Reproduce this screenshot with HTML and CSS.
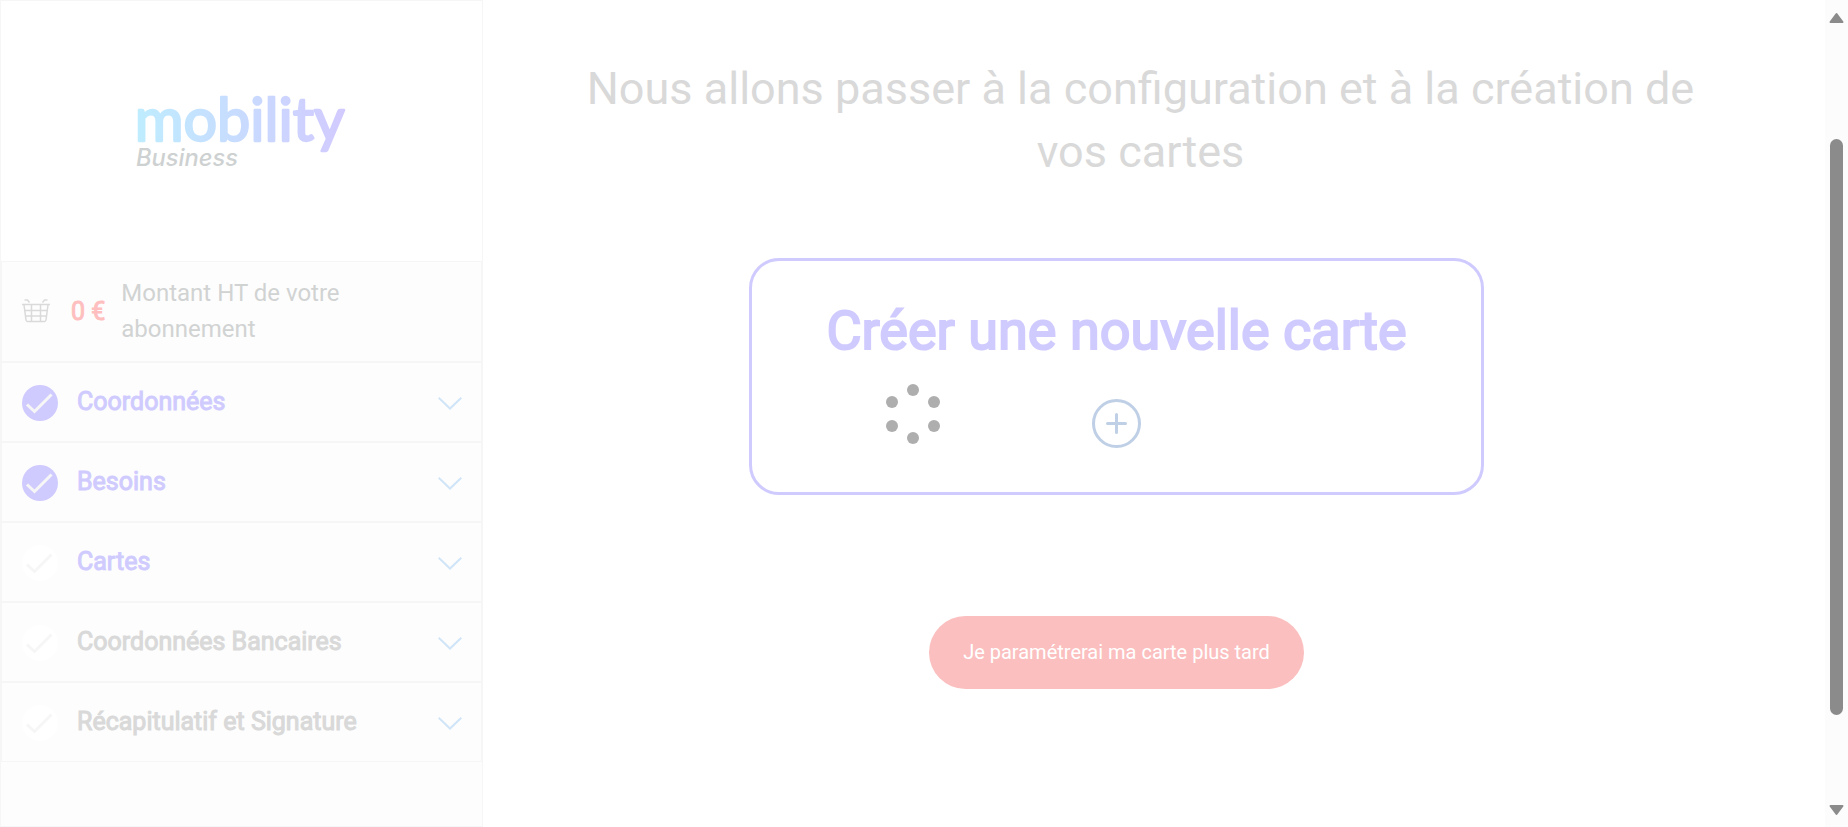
FILE: index.html
```html
<!DOCTYPE html>
<html lang="fr">
<head>
<meta charset="utf-8">
<title>Mobility Business</title>
<link rel="stylesheet" href="styles.css">
</head>
<body>
<svg class="defs" aria-hidden="true">
  <symbol id="check" viewBox="0 0 36 36"><circle class="disc" cx="18" cy="18" r="18"/><path class="tick" d="M5 19.500l7.500 7L29.500 9.500"/></symbol>
  <symbol id="chevron" viewBox="0 0 24 13"><path d="M.7 .8L12 11.500 23.300 .8"/></symbol>
</svg>
<div class="app">
  <aside class="sidebar">
    <div class="brand">
      <svg class="logo" viewBox="0 0 720 315" role="img" aria-label="Mobility Business">
        <defs><linearGradient id="ink" gradientUnits="userSpaceOnUse" x1="55" y1="0" x2="680" y2="0"><stop offset="0" stop-color="#bfecff"/><stop offset=".5" stop-color="#c8dbff"/><stop offset="1" stop-color="#d2caff"/></linearGradient></defs>
        <text class="wordmark" x="44" y="197">mobility</text>
        <text class="subbrand" x="48" y="274">Business</text>
      </svg>
    </div>
    <div class="amount">
      <svg class="basket" viewBox="0 0 28 24" aria-hidden="true"><path d="M2.500 1h3l2 2.500M25.500 1h-3l-2 2.500M0 5.500h28M2 6l2 15q.2 1.500 1.500 1.500h17q1.300 0 1.500-1.500l2-15M3 11.500h22M4 17h20M9.500 6v16M18.500 6v16"/></svg>
      <strong class="price">0 €</strong>
      <span class="caption">Montant HT de votre abonnement</span>
    </div>
    <nav class="steps">
      <button class="step done"><svg class="mark"><use href="#check"/></svg><span class="label">Coordonnées</span><svg class="chevron"><use href="#chevron"/></svg></button>
      <button class="step done"><svg class="mark"><use href="#check"/></svg><span class="label">Besoins</span><svg class="chevron"><use href="#chevron"/></svg></button>
      <button class="step current"><svg class="mark"><use href="#check"/></svg><span class="label">Cartes</span><svg class="chevron"><use href="#chevron"/></svg></button>
      <button class="step"><svg class="mark"><use href="#check"/></svg><span class="label">Coordonnées Bancaires</span><svg class="chevron"><use href="#chevron"/></svg></button>
      <button class="step"><svg class="mark"><use href="#check"/></svg><span class="label">Récapitulatif et Signature</span><svg class="chevron"><use href="#chevron"/></svg></button>
    </nav>
  </aside>
  <main class="content">
    <h1 class="title">Nous allons passer à la configuration et à la création de vos cartes</h1>
    <button class="card">
      <span class="card-title">Créer une nouvelle carte</span>
      <svg class="plus" viewBox="0 0 49 49" aria-hidden="true"><circle cx="24.500" cy="24.500" r="23"/><path d="M15.500 24.500h18M24.500 15.500v18"/></svg>
    </button>
    <button class="later">Je paramétrerai ma carte plus tard</button>
  </main>
  <div class="scrollbar" aria-hidden="true">
    <svg class="arrow" viewBox="0 0 15 11"><path d="M7.500 1.500L13.500 9.500H1.500z"/></svg>
    <div class="track"><div class="thumb"></div></div>
    <svg class="arrow" viewBox="0 0 15 11"><path d="M7.500 9.500L1.500 1.500H13.500z"/></svg>
  </div>
</div>
<div class="loading">
  <svg class="spinner" viewBox="0 0 54 60" role="img" aria-label="Chargement"><circle cx="27" cy="6" r="6"/><circle cx="48" cy="18" r="6"/><circle cx="48" cy="42" r="6"/><circle cx="27" cy="54" r="6"/><circle cx="6" cy="42" r="6"/><circle cx="6" cy="18" r="6"/></svg>
</div>
</body>
</html>
```
FILE: styles.css
```css
* { box-sizing: border-box; }
body { margin: 0; font-family: Roboto, "Liberation Sans", sans-serif; background: #fff; }
button { font-family: inherit; cursor: pointer; }
.defs { position: absolute; width: 0; height: 0; }
.app { display: flex; height: 100vh; overflow: hidden; }

.sidebar { flex: 0 0 483px; border: 1px solid #f6f6f6; background: #fdfdfd; }
.brand { height: 261px; padding: 74px 119px; background: #fff; border-bottom: 1px solid #f6f6f6; }
.logo { display: block; width: 240px; height: 105px; }
.wordmark { font-family: Lato, sans-serif; font-size: 178px; fill: url(#ink); stroke: url(#ink); stroke-width: 7px; stroke-linejoin: round; }
.subbrand { font-family: Inter, sans-serif; font-size: 71px; font-style: italic; font-weight: 500; fill: #ced1d1; }
.amount { display: flex; align-items: center; height: 100px; padding: 0 20px 1px; border: 1px solid #f6f6f6; border-top: 0; }
.basket { width: 28px; height: 24px; fill: none; stroke: #dadada; stroke-width: 1.500px; }
.price { margin-left: 21px; font-size: 25px; font-weight: 400; color: #ffbfbf; -webkit-text-stroke: 1px currentColor; }
.caption { width: 240px; margin-left: 16px; font-size: 24px; line-height: 36px; color: #d1d3d3; }
.step { display: flex; align-items: center; width: 100%; height: 80px; padding: 0 19px 0 20px; border: 1px solid #f6f6f6; background: none; color: #d9d9d9; text-align: left; }
.step.done, .step.current { color: #d0cbff; }
.mark { width: 36px; height: 36px; margin-top: 2px; fill: #fff; stroke: #f6f6f6; }
.done .mark { fill: #d0cbff; }
.disc { stroke: none; }
.tick { fill: none; stroke-width: 3px; }
.label { flex: 1; margin-left: 19px; font-size: 25px; line-height: 36px; -webkit-text-stroke: 1px currentColor; }
.chevron { width: 24px; height: 13px; margin-top: 2px; fill: none; stroke: #d0e5f7; stroke-width: 2px; }

.content { flex: 1; display: flex; flex-direction: column; align-items: center; padding: 57px 75px 0 0; }
.title { margin: 0; padding: 0 30px 0 78px; font-size: 45px; font-weight: 400; line-height: 63px; text-align: center; color: #d9d9d9; }
.card { display: flex; flex-direction: column; align-items: center; width: 58%; margin-top: 75px; padding: 38px 0 44px; border: 3px solid #d0cbff; border-radius: 30px; background: none; color: #d0cbff; }
.card-title { font-size: 54px; line-height: 64px; -webkit-text-stroke: 2px currentColor; }
.plus { width: 49px; height: 49px; margin-top: 36px; fill: none; stroke: #bfd0e6; stroke-width: 3px; stroke-linecap: round; }
.later { margin-top: 121px; padding: 0 34px; border: 0; border-radius: 37px; background: #fbbfbf; color: #fff; font-size: 20px; line-height: 73px; }

.scrollbar { flex: 0 0 23px; display: flex; flex-direction: column; align-items: center; padding: 12px 0 11px; background: #fcfcfc; }
.arrow { width: 15px; height: 12px; fill: #8b8b8b; stroke: #8b8b8b; stroke-width: 2px; stroke-linejoin: round; }
.track { flex: 1; padding: 115px 0 89px; }
.thumb { width: 13px; height: 100%; border-radius: 7px; background: #8b8b8b; }

.loading { position: fixed; inset: 0 23px 0 0; display: flex; align-items: center; justify-content: center; pointer-events: none; }
.spinner { width: 54px; height: 60px; fill: #aeaeae; }
```
